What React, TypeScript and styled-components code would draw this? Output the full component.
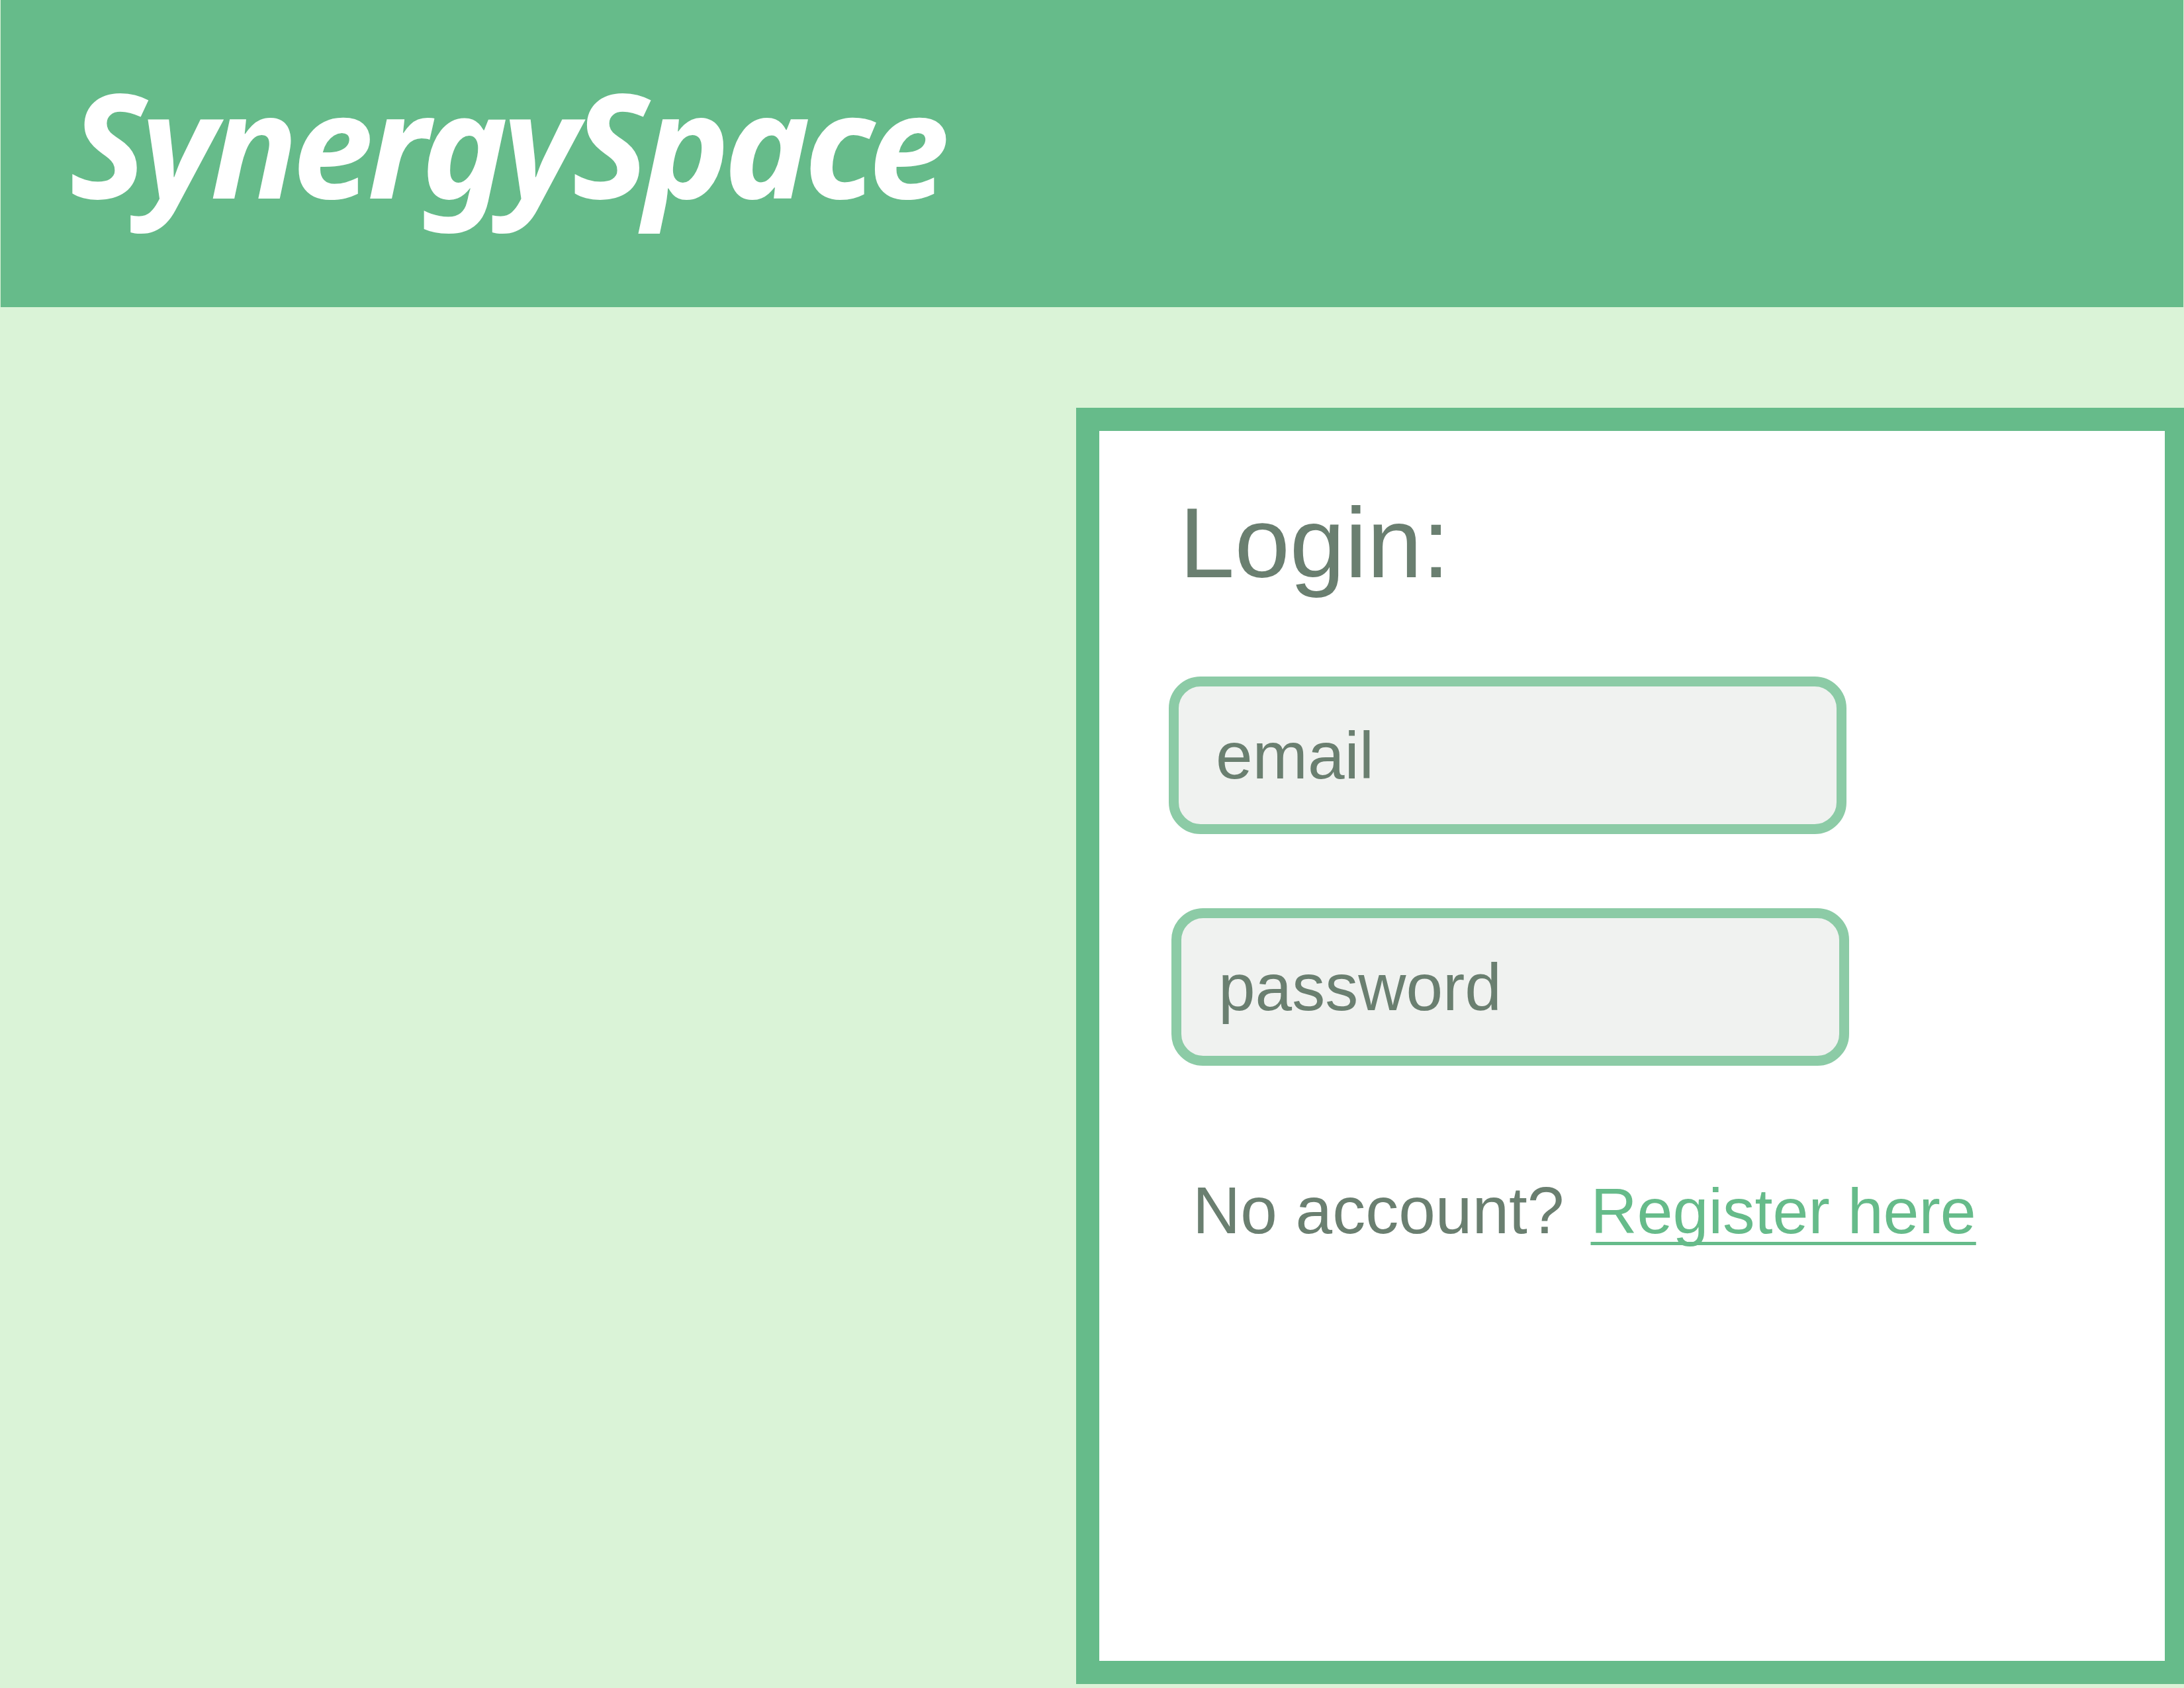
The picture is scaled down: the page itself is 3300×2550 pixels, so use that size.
import React from "react";
import styled, { createGlobalStyle } from "styled-components";

const GlobalStyle = createGlobalStyle`
  html, body {
    margin: 0;
    padding: 0;
    background: #daf3d7;
    overflow: hidden;
  }
  * { box-sizing: border-box; }
`;

const Page = styled.div`
  width: 3300px;
  height: 2550px;
  background: #daf3d7;
  display: flex;
  flex-direction: column;
  overflow: hidden;
  font-family: "Liberation Sans", Arial, sans-serif;
`;

const Header = styled.header`
  height: 464px;
  margin: 0 1px;
  background: #66bb8a;
  padding: 105px 0 0 104px;
  flex-shrink: 0;
`;

const Brand = styled.h1`
  margin: 0;
  font-family: "Noto Sans", "Open Sans", sans-serif;
  font-style: italic;
  font-weight: 700;
  font-size: 220px;
  line-height: 1;
  color: #ffffff;
  letter-spacing: -9px;
`;

const Main = styled.main`
  flex: 1;
  display: flex;
  padding: 152px 0 6px 1626px;
`;

const Card = styled.section`
  flex: 0 0 1680px;
  background: #ffffff;
  border: 35px solid #66bb8a;
  display: flex;
  flex-direction: column;
  padding: 83px 0 0 0;
`;

const Title = styled.h2`
  margin: 0 0 115px 121px;
  font-size: 150px;
  font-weight: 400;
  line-height: normal;
  color: #6a7f70;
`;

const Field = styled.input<{ $shift?: number }>`
  width: 1024px;
  height: 238px;
  margin-left: ${(p) => 105 + (p.$shift ?? 0)}px;
  border: 15px solid #8ccba6;
  border-radius: 48px;
  background: #f0f2f0;
  padding: 0 0 0 56px;
  font-family: "Liberation Sans", Arial, sans-serif;
  font-size: 100px;
  color: #6a7f70;
  outline: none;

  &::placeholder {
    color: #6a7f70;
    opacity: 1;
  }
`;

const Fields = styled.div`
  display: flex;
  flex-direction: column;
  gap: 112px;
`;

const Footer = styled.p`
  margin: 161px 0 0 141px;
  display: flex;
  align-items: baseline;
  gap: 40px;
  font-size: 100px;
  line-height: 115px;
  color: #6a7f70;
`;

const RegisterLink = styled.a`
  font-size: 97px;
  color: #66bb8a;
  text-decoration: underline;
  text-decoration-thickness: 5px;
  text-underline-offset: 13px;
  text-decoration-skip-ink: none;
  cursor: pointer;
`;

export default function App() {
  return (
    <>
      <GlobalStyle />
      <Page>
        <Header>
          <Brand>SynergySpace</Brand>
        </Header>
        <Main>
          <Card>
            <Title>Login:</Title>
            <Fields>
              <Field type="email" placeholder="email" />
              <Field type="password" placeholder="password" $shift={4} />
            </Fields>
            <Footer>
              <span>No account?</span>
              <RegisterLink href="#">Register here</RegisterLink>
            </Footer>
          </Card>
        </Main>
      </Page>
    </>
  );
}
